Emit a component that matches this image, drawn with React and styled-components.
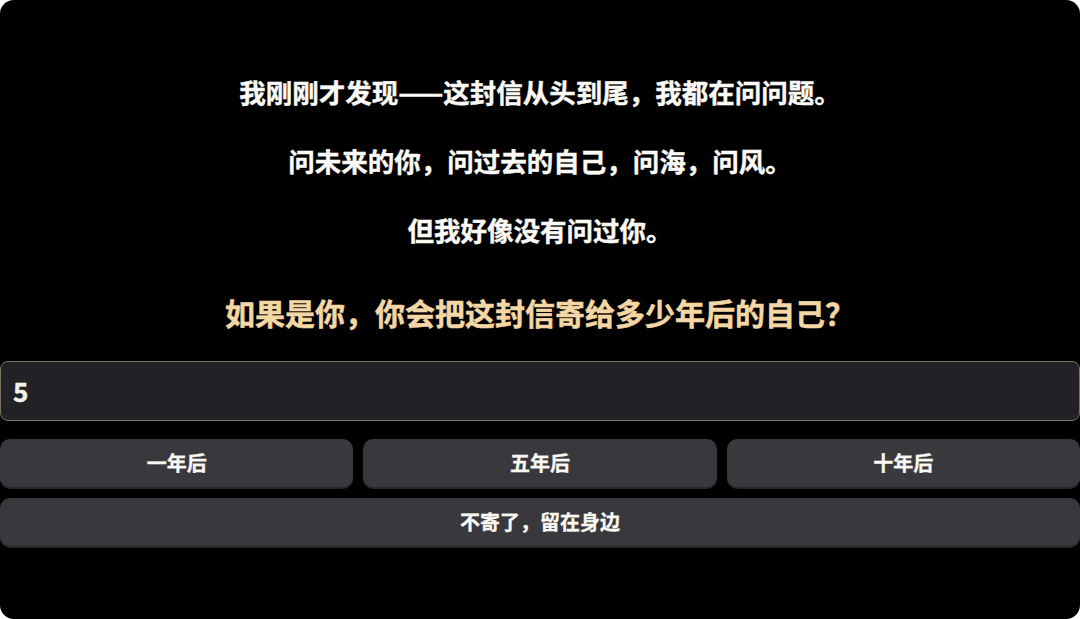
import React, { useState } from 'react';
import styled, { createGlobalStyle } from 'styled-components';

const GlobalStyle = createGlobalStyle`
  html, body {
    margin: 0;
    padding: 0;
    background: #ffffff;
  }
  body {
    font-family: "Noto Sans CJK SC", "Noto Sans", sans-serif;
  }
`

const lines = [
  '我刚刚才发现——这封信从头到尾，我都在问问题。',
  '问未来的你，问过去的自己，问海，问风。',
  '但我好像没有问过你。',
]

const choices = ['一年后', '五年后', '十年后']

function App() {
  const [answer, setAnswer] = useState('5')

  return (
    <>
      <GlobalStyle />
      <Page>
        <Letter>
          {lines.map((line) => (
            <Line key={line}>{line}</Line>
          ))}
        </Letter>
        <Question>如果是你，你会把这封信寄给多少年后的自己？</Question>
        <AnswerInput
          type="text"
          value={answer}
          onChange={(e) => setAnswer(e.target.value)}
        />
        <ChoiceRow>
          {choices.map((c) => (
            <Choice key={c} onClick={() => setAnswer(c)}>{c}</Choice>
          ))}
        </ChoiceRow>
        <Choice onClick={() => setAnswer('不寄了')}>不寄了，留在身边</Choice>
      </Page>
    </>
  )
}

const Page = styled.div`
  width: 1080px;
  height: 619px;
  box-sizing: border-box;
  background: #000;
  border-radius: 14px;
  overflow: hidden;
  display: flex;
  flex-direction: column;
  padding-top: 74px;
`

const Letter = styled.div`
  display: flex;
  flex-direction: column;
  align-items: center;
  gap: 34px;
`

const Line = styled.p`
  margin: 0;
  font-size: 26.5px;
  line-height: 35px;
  font-weight: 700;
  -webkit-text-stroke: 0.4px #fbfaf6;
  color: #fbfaf6;
  text-align: center;
`

const Question = styled.h2`
  margin: 45px 0 29px;
  font-size: 30px;
  line-height: 40px;
  font-weight: 700;
  -webkit-text-stroke: 0.5px #f3d7a4;
  color: #f3d7a4;
  text-align: center;
`

const AnswerInput = styled.input`
  box-sizing: border-box;
  width: 100%;
  height: 60px;
  margin: 0 0 18px;
  padding: 0 12px 2px;
  background: #222126;
  border: 1px solid #7d715f;
  border-radius: 8px;
  color: #f4f2ec;
  font-family: "Noto Sans CJK SC", "Noto Sans", sans-serif;
  font-size: 26px;
  font-weight: 700;
  -webkit-text-stroke: 0.4px #f4f2ec;
  :focus {
    outline: none;
  }
`

const ChoiceRow = styled.div`
  display: grid;
  grid-template-columns: repeat(3, 1fr);
  gap: 10px;
  margin-bottom: 11px;
`

const Choice = styled.button`
  height: 48px;
  padding: 0 0 2px;
  border: none;
  border-radius: 10px;
  background: #39383d;
  box-shadow: 0 2px 0 #26252a;
  color: #faf8f2;
  font-family: "Noto Sans CJK SC", "Noto Sans", sans-serif;
  font-size: 20px;
  font-weight: 700;
  -webkit-text-stroke: 0.3px #faf8f2;
  cursor: pointer;
  :hover {
    background: #424147;
  }
`

export default App;
